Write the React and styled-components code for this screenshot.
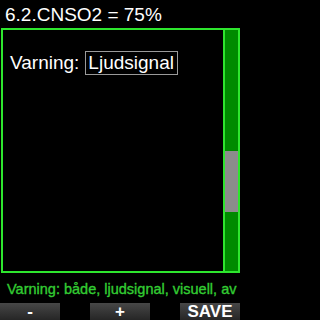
import React from 'react';
import styled, { createGlobalStyle } from 'styled-components';

const Global = createGlobalStyle`
  html, body {
    margin: 0;
    padding: 0;
    background: #000;
  }
  body {
    font-family: "Liberation Sans", Arial, sans-serif;
  }
`;

const Screen = styled.div`
  width: 240px;
  height: 320px;
  background: #000;
  display: flex;
  flex-direction: column;
  overflow: hidden;
`;

const Title = styled.div`
  height: 28px;
  box-sizing: border-box;
  padding: 4px 0 0 5px;
  font-size: 19px;
  line-height: 22px;
  color: #fff;
  white-space: nowrap;
`;

const Frame = styled.div`
  width: 239px;
  height: 245px;
  margin-left: 1px;
  box-sizing: border-box;
  border: 2px solid #2ee62e;
  display: flex;
`;

const Content = styled.div`
  flex: 1;
  padding: 21px 0 0 7px;
`;

const Row = styled.div`
  display: flex;
  align-items: center;
  gap: 6px;
  font-size: 19px;
  color: #fff;
  white-space: nowrap;
`;

const Value = styled.span`
  display: inline-block;
  height: 24px;
  box-sizing: border-box;
  border: 1px solid #9a9a9a;
  padding: 0 3px 0 2px;
  line-height: 22px;
`;

const Track = styled.div`
  width: 13px;
  border-left: 2px solid #2ee62e;
  background: #008a00;
`;

const Thumb = styled.div`
  margin-top: 121px;
  height: 61px;
  background: #8c8c8c;
`;

const Hint = styled.div`
  height: 30px;
  box-sizing: border-box;
  padding: 8px 0 0 7px;
  font-size: 14.5px;
  line-height: 16px;
  color: #33cc33;
  -webkit-text-stroke: 0.35px #33cc33;
  white-space: nowrap;
  overflow: hidden;
`;

const Buttons = styled.div`
  height: 17px;
  display: flex;
  justify-content: space-between;
`;

const Button = styled.div`
  width: 60px;
  height: 17px;
  background: linear-gradient(#474747, #262626);
  color: #fff;
  font-size: 17px;
  font-weight: 700;
  line-height: 17px;
  text-align: center;
`;

export default function App() {
  return (
    <Screen>
      <Global />
      <Title>6.2.CNSO2 = 75%</Title>
      <Frame>
        <Content>
          <Row>
            <span>Varning:</span>
            <Value>Ljudsignal</Value>
          </Row>
        </Content>
        <Track>
          <Thumb />
        </Track>
      </Frame>
      <Hint>Varning: både, ljudsignal, visuell, av</Hint>
      <Buttons>
        <Button>-</Button>
        <Button>+</Button>
        <Button>SAVE</Button>
      </Buttons>
    </Screen>
  );
}
